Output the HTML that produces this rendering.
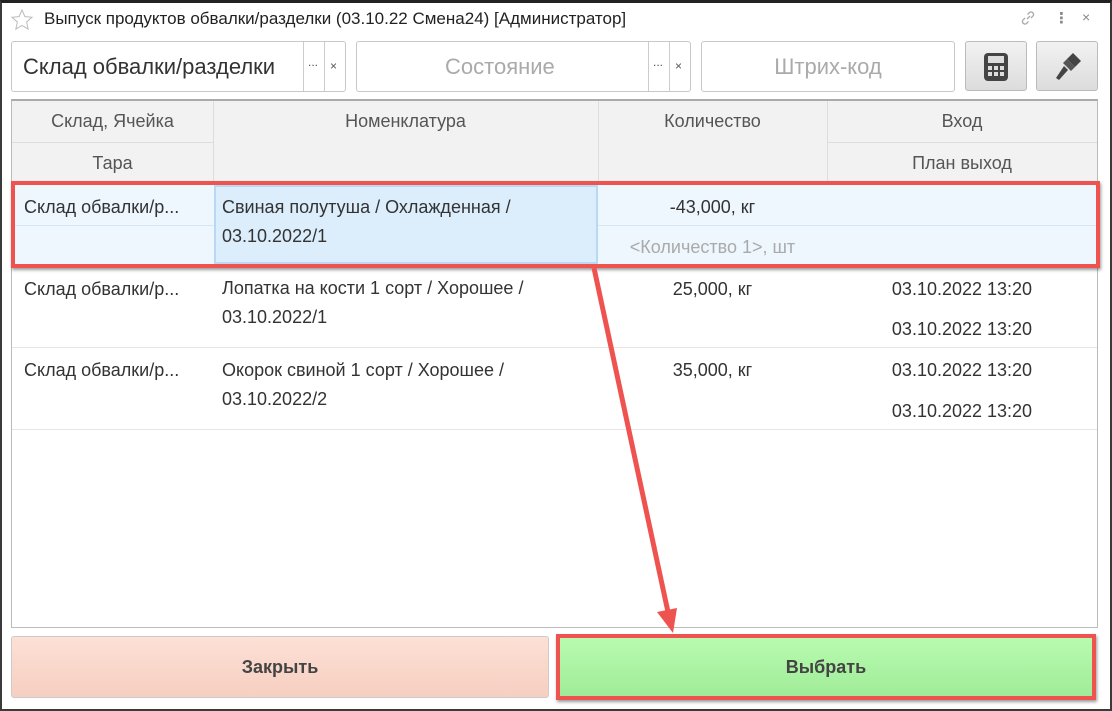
<!DOCTYPE html><html><head><meta charset="utf-8"><style>
*{box-sizing:border-box;margin:0;padding:0}
body{width:1112px;height:711px;background:#fff;font-family:"Liberation Sans","DejaVu Sans",sans-serif;position:relative;overflow:hidden;color:#333}
.a{position:absolute}
.win{left:0;top:0;width:1112px;height:711px;border:2px solid #3a3a3a;border-top:3px solid #222}
.fld{border:1px solid #c8c8c8;border-radius:3px;height:51px;top:41px;background:#fff;font-size:22px;line-height:49px}
.cell{position:absolute;font-size:18px;line-height:41px;white-space:nowrap;overflow:hidden}
.btn{border:1px solid #bbb;border-radius:3px;background:linear-gradient(#f2f2f2,#dcdcdc);top:41px;width:62px;height:50px}
</style></head><body>
<div class="a win"></div>
<svg class="a" style="left:10px;top:8px" width="24" height="24" viewBox="0 0 24 24"><path d="M12 2l2.9 6.6 7.1.7-5.4 4.8 1.6 7-6.2-3.7-6.2 3.7 1.6-7L2 9.3l7.1-.7z" fill="none" stroke="#bbb" stroke-width="1"/></svg>
<div class="a" style="left:44px;top:9px;font-size:17px;color:#222">Выпуск продуктов обвалки/разделки (03.10.22 Смена24) [Администратор]</div>
<svg class="a" style="left:1020px;top:10px" width="16" height="16"><path d="M7 9l3-3M5 8l-2 2a2.5 2.5 0 0 0 3.5 3.5l2-2M11 8l2-2a2.5 2.5 0 0 0-3.5-3.5l-2 2" fill="none" stroke="#aaa" stroke-width="1.3"/></svg>
<div class="a" style="left:1054px;top:9px;font-size:15px;color:#888;font-weight:bold">⋮</div>
<div class="a" style="left:1082px;top:9px;font-size:14px;color:#888">×</div>

<div class="a fld" style="left:11px;width:335px"><span style="padding-left:11px;color:#333">Склад обвалки/разделки</span>
<div class="a" style="left:291px;top:0;width:1px;height:49px;background:#ccc"></div><div class="a" style="left:296px;top:-4px;font-size:12px;color:#555">...</div>
<div class="a" style="left:312px;top:0;width:1px;height:49px;background:#ccc"></div><div class="a" style="left:318px;top:0;font-size:12px;color:#555">×</div></div>
<div class="a fld" style="left:356px;width:335px;color:#aaa;"><span style="position:absolute;left:88px">Состояние</span>
<div class="a" style="left:291px;top:0;width:1px;height:49px;background:#ccc"></div><div class="a" style="left:296px;top:-4px;font-size:12px;color:#555">...</div>
<div class="a" style="left:312px;top:0;width:1px;height:49px;background:#ccc"></div><div class="a" style="left:318px;top:0;font-size:12px;color:#555">×</div></div>
<div class="a fld" style="left:701px;width:254px;color:#aaa;text-align:center">Штрих-код</div>
<div class="a btn" style="left:965px"><svg style="position:absolute;left:17px;top:10px" width="26" height="30"><rect x="1" y="1" width="24" height="28" rx="4" fill="#444"/><rect x="5" y="4" width="16" height="7" fill="#ddd"/><g fill="#ddd"><rect x="5" y="14" width="4" height="4"/><rect x="11" y="14" width="4" height="4"/><rect x="17" y="14" width="4" height="4"/><rect x="5" y="20" width="4" height="4"/><rect x="11" y="20" width="4" height="4"/><rect x="17" y="20" width="4" height="4"/></g></svg></div>
<div class="a btn" style="left:1036px"><svg style="position:absolute;left:14px;top:9px" width="32" height="32"><path d="M22 2l8 8-6 6-8-8z" fill="#444"/><path d="M16 8l8 8-4 4-8-8z" fill="#555"/><path d="M13 15l4 4-9 10-3-2z" fill="#444"/></svg></div>

<div class="a" style="left:11px;top:99px;width:1087px;height:529px;border:1px solid #bbb;border-top:2px solid #aaa"></div>
<div class="a" style="left:12px;top:101px;width:1085px;height:82px;background:#f2f2f2;border-bottom:1px solid #ddd"></div>
<div class="a" style="left:213px;top:101px;width:1px;height:82px;background:#ddd"></div>
<div class="a" style="left:598px;top:101px;width:1px;height:82px;background:#ddd"></div>
<div class="a" style="left:827px;top:101px;width:1px;height:82px;background:#ddd"></div>
<div class="a" style="left:12px;top:142px;width:201px;height:1px;background:#ddd"></div>
<div class="a" style="left:827px;top:142px;width:270px;height:1px;background:#ddd"></div>
<div class="cell" style="left:12px;top:101px;width:201px;text-align:center;color:#555">Склад, Ячейка</div>
<div class="cell" style="left:12px;top:143px;width:201px;text-align:center;color:#555">Тара</div>
<div class="cell" style="left:213px;top:101px;width:385px;text-align:center;color:#555">Номенклатура</div>
<div class="cell" style="left:598px;top:101px;width:229px;text-align:center;color:#555">Количество</div>
<div class="cell" style="left:827px;top:101px;width:270px;text-align:center;color:#555">Вход</div>
<div class="cell" style="left:827px;top:143px;width:270px;text-align:center;color:#555">План выход</div>

<div class="a" style="left:12px;top:184px;width:1085px;height:81px;background:#eef6fe"></div>
<div class="a" style="left:12px;top:225px;width:1085px;height:1px;background:#d6e6f4"></div>
<div class="a" style="left:214px;top:185px;width:384px;height:79px;background:#dcedfc;border:2px solid #b8d8f4"></div>
<div class="a" style="left:12px;top:347px;width:1085px;height:1px;background:#e6e6e6"></div>
<div class="a" style="left:12px;top:429px;width:1085px;height:1px;background:#e6e6e6"></div>

<div class="cell" style="left:24px;top:187px">Склад обвалки/р...</div>
<div class="cell" style="left:222px;top:193px;line-height:29px;white-space:normal;width:370px">Свиная полутуша / Охлажденная / 03.10.2022/1</div>
<div class="cell" style="left:598px;top:187px;width:229px;text-align:center">-43,000, кг</div>
<div class="cell" style="left:598px;top:227px;width:229px;text-align:center;color:#aaa">&lt;Количество 1&gt;, шт</div>

<div class="cell" style="left:24px;top:269px">Склад обвалки/р...</div>
<div class="cell" style="left:222px;top:274px;line-height:29px;white-space:normal;width:370px">Лопатка на кости 1 сорт / Хорошее / 03.10.2022/1</div>
<div class="cell" style="left:598px;top:269px;width:229px;text-align:center">25,000, кг</div>
<div class="cell" style="left:827px;top:269px;width:270px;text-align:center">03.10.2022 13:20</div>
<div class="cell" style="left:827px;top:309px;width:270px;text-align:center">03.10.2022 13:20</div>

<div class="cell" style="left:24px;top:350px">Склад обвалки/р...</div>
<div class="cell" style="left:222px;top:356px;line-height:29px;white-space:normal;width:370px">Окорок свиной 1 сорт / Хорошее / 03.10.2022/2</div>
<div class="cell" style="left:598px;top:350px;width:229px;text-align:center">35,000, кг</div>
<div class="cell" style="left:827px;top:350px;width:270px;text-align:center">03.10.2022 13:20</div>
<div class="cell" style="left:827px;top:391px;width:270px;text-align:center">03.10.2022 13:20</div>

<div class="a" style="left:11px;top:181px;width:1089px;height:87px;border:4px solid #ef5350;box-shadow:1px 2px 3px rgba(0,0,0,.4)"></div>

<div class="a" style="left:11px;top:636px;width:538px;height:62px;border:1px solid #ccc;border-radius:3px;background:linear-gradient(#fde0d6,#f6cfc0);font-size:18px;font-weight:bold;color:#444;text-align:center;line-height:60px">Закрыть</div>
<div class="a" style="left:556px;top:634px;width:540px;height:66px;border:4px solid #ef5350;box-shadow:1px 2px 3px rgba(0,0,0,.4);background:linear-gradient(#b8fbb0,#a0ec98);font-size:18px;font-weight:bold;color:#444;text-align:center;line-height:58px">Выбрать</div>

<svg class="a" style="left:0;top:0" width="1112" height="711"><line x1="594" y1="268" x2="668" y2="612" stroke="#ef5350" stroke-width="5"/><path d="M657 612l20 -4 -4 25z" fill="#ef5350"/></svg>
</body></html>
